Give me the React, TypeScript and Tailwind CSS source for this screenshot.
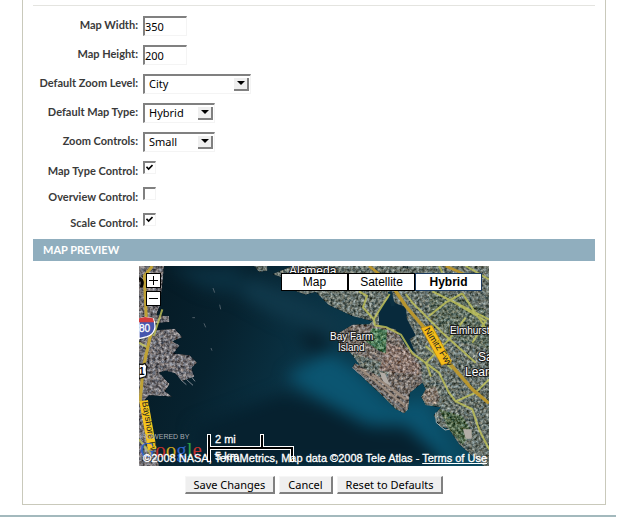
import { useState } from "react";
import type { ReactNode } from "react";

const labelClass =
  "w-[105px] shrink-0 whitespace-nowrap text-right font-['Lato','Noto_Sans',sans-serif] text-[11px] font-bold text-[#3a3a3a]";
const sunken = "border-t-2 border-l-2 border-r border-b border-t-[#808080] border-l-[#808080] border-r-[#f4f4f4] border-b-[#f4f4f4]";

function Row({ id, label, children }: { id: string; label: string; children: ReactNode }) {
  return (
    <div className="flex h-[29px] items-center gap-[5px]">
      <label htmlFor={id} className={labelClass}>
        {label}
      </label>
      {children}
    </div>
  );
}

function TextRow({ id, label, value }: { id: string; label: string; value: string }) {
  return (
    <Row id={id} label={label}>
      <input
        id={id}
        type="text"
        defaultValue={value}
        className={`h-5 w-11 rounded-none bg-white text-[11px] text-black outline-none ${sunken}`}
      />
    </Row>
  );
}

function SelectRow({ id, label, options, wide }: { id: string; label: string; options: string[]; wide?: boolean }) {
  return (
    <Row id={id} label={label}>
      <div className={`relative h-5 ${wide ? "w-[108px]" : "w-[72px]"}`}>
        <select
          id={id}
          className={`block h-full w-full appearance-none rounded-none bg-white pl-1 text-[11px] text-black outline-none ${sunken}`}
        >
          {options.map((o) => (
            <option key={o}>{o}</option>
          ))}
        </select>
        <span className="pointer-events-none absolute top-1 right-0.5 flex h-[13px] w-[15px] items-center justify-center border-r-2 border-b-2 border-[#808080] bg-[#efefef]">
          <svg viewBox="0 0 8 4" className="h-1 w-2" aria-hidden="true">
            <path d="M0 0h8L4 4z" fill="#000" />
          </svg>
        </span>
      </div>
    </Row>
  );
}

function CheckRow({ id, label, checked }: { id: string; label: string; checked?: boolean }) {
  const [on, setOn] = useState(!!checked);
  return (
    <div className="flex h-[26px] items-start gap-[5px] pt-[3px]">
      <label htmlFor={id} className={`${labelClass} leading-5`}>
        {label}
      </label>
      <span className="relative size-[13px]">
        <input
          id={id}
          type="checkbox"
          checked={on}
          onChange={(e) => setOn(e.target.checked)}
          className={`block size-[13px] appearance-none bg-white ${sunken}`}
        />
        {on && (
          <svg viewBox="0 0 7 7" className="pointer-events-none absolute top-[3px] left-[3px] size-[7px]" aria-hidden="true">
            <path d="M.5 2.8 2.6 5 6.5 1" fill="none" stroke="#000" strokeWidth="1.6" />
          </svg>
        )}
      </span>
    </div>
  );
}

function Satellite() {
  return (
    <svg viewBox="0 0 350 200" className="block h-full w-full font-['Liberation_Sans',Arial,sans-serif]" aria-label="Satellite map of San Francisco Bay" role="img">
      <svg viewBox="0 0 1050 600" width="350" height="200">
        <defs>
          <linearGradient id="bay" x1="0" y1="0" x2="1" y2="0.25">
            <stop offset="0" stopColor="#051822" />
            <stop offset="0.3" stopColor="#07222f" />
            <stop offset="0.55" stopColor="#0a3345" />
            <stop offset="1" stopColor="#0a465c" />
          </linearGradient>
          <filter id="soft" x="-30%" y="-30%" width="160%" height="160%" colorInterpolationFilters="sRGB">
            <feGaussianBlur stdDeviation="24" />
          </filter>
          <filter id="city" x="0" y="0" width="1050" height="600" filterUnits="userSpaceOnUse" colorInterpolationFilters="sRGB">
            <feTurbulence type="fractalNoise" baseFrequency="0.12" numOctaves="3" seed="8" result="n" />
            <feColorMatrix in="n" type="matrix" values="1 .3 0 0 -.15  1 .2 .1 0 -.15  1 .1 .2 0 -.15  0 0 0 0 1" result="g" />
            <feComposite in="SourceGraphic" in2="g" operator="arithmetic" k1="0" k2="1" k3="0.85" k4="-0.42" result="m" />
            <feComposite in="m" in2="SourceGraphic" operator="in" />
          </filter>
        </defs>
        <rect width="1050" height="600" fill="url(#bay)" />
        <g filter="url(#soft)">
          <path d="M330 30 480 90 620 180 600 210 430 160 300 90Z" fill="#10384a" />
          <path d="M440 330 570 260 650 310 760 420 860 400 960 600 700 480 560 410Z" fill="#0b5571" />
          <path d="M470 200 540 200 580 250 520 260Z" fill="#071d29" />
          <path d="M430 380 560 415 680 480 800 480 900 570 900 600 180 600 160 480Z" fill="#06212f" />
          <path d="M80 0 300 0 330 90 200 70Z" fill="#0b3041" />
        </g>
        <g filter="url(#city)">
          <path d="M0 0H75L70 60 62 120 52 148 90 150 92 168 48 172 50 192 108 188 130 214 100 226 122 238 104 262 152 268 174 290 158 306 166 332 128 346 108 322 80 314 60 320 92 354 78 376 100 392 30 388 18 402 30 480 50 540 60 600H0Z" fill="#706e72" />
          <path d="M345 0H385V14L360 18ZM400 24 460 0H1050V600H1035L960 535 930 490 900 480 884 448 905 424 860 418 846 392 860 370 850 350 812 380 808 430 796 442 770 430 720 380 640 305 648 292 662 298 635 262 600 230 596 206 640 176 690 174 700 166 640 150 570 118 530 78 500 86 470 76 440 40Z" fill="#66706a" />
          <path d="M640 176H742L790 206 822 262 846 300 850 350 812 380 806 430 790 440 640 305 648 292 700 320 740 340 760 300 700 280 640 262 600 230 600 200Z" fill="#746d68" />
          <path d="M745 230 800 250 840 300 838 326 720 314Z" fill="#85736b" />
          <path d="M700 186 744 192 740 262 716 252 680 226Z" fill="#4c7856" />
          <path d="M870 60 1040 130 1050 250 940 220 870 150Z" fill="#5f6d60" />
          <path d="M900 430 970 450 1000 500 970 536 930 490Z" fill="#50664b" />
          <path d="M860 370 890 362 902 392 894 414 866 416 850 396Z" fill="#857a70" />
        </g>
        <path d="M720 130 752 92 770 112 800 124 804 160 830 208 812 220 830 262 800 240 770 190 720 180Z" fill="#082a3c" />
        <path d="M752 76 762 120" stroke="#0c3041" strokeWidth="12" />
        <g stroke="#7d868e" strokeWidth="3" fill="none">
          <path d="M640 305 790 430M142 340 162 358M154 328 168 346M126 342 142 356" />
          <path d="m195 172 5 12M222 66l5 14M242 116l3 14M216 246l3 8M160 155h8" opacity=".6" />
        </g>
        <path d="M665 308 796 418M700 326 800 400" stroke="#9c8c7e" strokeWidth="6" />
        <path d="M722 318 738 322 754 360 732 346ZM972 490H998V518H980Z" fill="#b3ada6" />
        <path d="M890 440 892 470 918 492 930 490" fill="none" stroke="#a8b0ae" strokeWidth="3" />
        <g fill="none" stroke="#c3c559" strokeWidth="6" opacity=".8">
          <path d="M660 76 684 90 672 124 704 160 708 178 742 184 786 206 820 262 862 292 900 320 930 380 950 406 1010 380 1050 340" />
          <path d="M704 160 752 84M800 84 820 110 910 200 1010 290M870 150 920 110 970 82M970 82 1050 200M930 100 1040 165 1000 230M862 290 930 220 980 155M950 406 1000 430 1020 490 1050 550M880 76 1050 160" />
          <path d="M862 292 876 332M860 240 940 310M900 0 910 20M980 0 1050 40" />
          <path d="M40 196 18 270M0 230 24 244M44 210 70 130M0 520 40 570" />
        </g>
        <path d="M760 60 800 120 860 190 930 290 1000 370 1050 412" fill="none" stroke="#b8962f" strokeWidth="10" />
        <path d="M690 0 740 40M920 0 1010 40" stroke="#b8942f" strokeWidth="8" />
        <path d="M40 0 16 30 22 160M36 200 12 310 4 400 30 470 36 560" fill="none" stroke="#bfa236" strokeWidth="9" />
        <path d="M14 404 40 550" stroke="#f4c51c" strokeWidth="26" />
        <path d="M846 186 878 178 938 286 908 298Z" fill="#f5bd18" stroke="#b8860b" strokeWidth="2" />
        <path d="M0 158 18 154 42 158C54 180 48 204 24 212L0 218Z" fill="#4656ad" stroke="#fff" strokeWidth="4" />
        <path d="M0 157 18 153 42 157 45 169H0Z" fill="#d33c3c" />
        <path d="M0 294 10 296 18 292 24 302C18 312 28 322 20 332L0 338Z" fill="#fff" stroke="#111" strokeWidth="4" />
        <path d="M0 36Q16 44 6 64" fill="none" stroke="#050505" strokeWidth="9" />
      </svg>

      <g fill="#fff" stroke="#1c1c1c" strokeWidth="2" paintOrder="stroke" strokeLinejoin="round">
        <text x="150" y="9" fontSize="12">Alameda</text>
        <text x="191" y="74" fontSize="10">Bay Farm</text>
        <text x="199" y="85" fontSize="10">Island</text>
        <text x="311" y="68" fontSize="10">Elmhurst</text>
        <text x="339" y="95" fontSize="12">Sa</text>
        <text x="326" y="110" fontSize="12">Lean</text>
      </g>
      <text x="0" y="66" fontSize="10" fill="#fff" stroke="#fff" strokeWidth=".3">80</text>
      <text x="0" y="109" fontSize="10" fontWeight="bold" fill="#000">1</text>
      <text transform="translate(285 64) rotate(57)" fontSize="9" fill="#222">Nimitz Fwy</text>
      <text transform="translate(3 136) rotate(80)" fontSize="9" fill="#222">Bayshore Fwy</text>
      <text x="3" y="173" fontSize="7" fill="#a5abb0">POWERED BY</text>
      <g fontSize="21" className="font-['Liberation_Serif',serif]">
        <text x="1" y="191">
          <tspan fill="#2f62c4">G</tspan>
          <tspan fill="#c2302b">o</tspan>
          <tspan fill="#c9a51d">o</tspan>
          <tspan fill="#2f62c4">g</tspan>
          <tspan fill="#2e9a45">l</tspan>
          <tspan fill="#c2302b">e</tspan>
        </text>
      </g>
      <g fill="none" strokeLinecap="square">
        <path d="M70 170V194M70 182H153M123 170V182M153 184V194" stroke="#fff" strokeWidth="4" />
        <path d="M70 170V194M70 182H153M123 170V182M153 184V194" stroke="#000" strokeWidth="2" />
      </g>
      <g fill="#fff" fontSize="11" stroke="#fff" strokeWidth=".3">
        <text x="76" y="177">2 mi</text>
        <text x="76" y="194">5 km</text>
      </g>
    </svg>
  );
}

const mapButton = "h-[18px] w-[67px] border bg-white text-center text-[12px] leading-4 text-black";
const zoomButton = "flex size-[15px] items-center justify-center border border-black bg-white";

function MapPreview() {
  return (
    <div className="relative mx-auto mt-[5px] h-[200px] w-[350px] overflow-hidden bg-[#06202c] font-['Liberation_Sans',Arial,sans-serif]">
      <Satellite />
      <div className="absolute top-[7px] left-[7px] flex flex-col gap-[3px]">
        <button type="button" aria-label="Zoom in" className={zoomButton}>
          <svg viewBox="0 0 9 9" className="size-[9px]">
            <path d="M0 4.5h9M4.5 0v9" stroke="#000" />
          </svg>
        </button>
        <button type="button" aria-label="Zoom out" className={zoomButton}>
          <svg viewBox="0 0 9 9" className="size-[9px]">
            <path d="M0 4.5h9" stroke="#000" />
          </svg>
        </button>
      </div>
      <div className="absolute top-[7px] right-[7px] flex">
        <button type="button" className={`${mapButton} border-black`}>Map</button>
        <button type="button" className={`${mapButton} border-black`}>Satellite</button>
        <button type="button" className={`${mapButton} border-[#1c3a5e] font-bold`}>Hybrid</button>
      </div>
      <p className="absolute right-[2px] bottom-0 whitespace-nowrap text-[11px] leading-4 text-white [-webkit-text-stroke:0.3px_white]">
        ©2008 NASA, TerraMetrics, Map data ©2008 Tele Atlas - <a href="#terms" className="underline">Terms of Use</a>
      </p>
    </div>
  );
}

const formButton =
  "h-[18px] border-t border-l border-r-2 border-b-2 border-t-[#f6f6f6] border-l-[#f6f6f6] border-r-[#808080] border-b-[#808080] bg-[#efefef] px-2 text-[11px] leading-[15px] text-black";

export default function App() {
  return (
    <main className="bg-white font-['Noto_Sans',sans-serif]">
      <form className="mr-[29px] ml-[22px] border-x border-b border-[#c9c9bb] px-[10px] pb-[10px]" onSubmit={(e) => e.preventDefault()}>
        <hr className="mb-[5px] h-1.5 border-t-0 border-b border-[#e4e4e0]" />
        <TextRow id="width" label="Map Width:" value="350" />
        <TextRow id="height" label="Map Height:" value="200" />
        <SelectRow id="zoom" label="Default Zoom Level:" options={["City", "Street", "Country"]} wide />
        <SelectRow id="type" label="Default Map Type:" options={["Hybrid", "Map", "Satellite"]} />
        <SelectRow id="controls" label="Zoom Controls:" options={["Small", "Large", "None"]} />
        <div className="mt-0.5">
          <CheckRow id="map-type" label="Map Type Control:" checked />
          <CheckRow id="overview" label="Overview Control:" />
          <CheckRow id="scale" label="Scale Control:" checked />
        </div>
        <h2 className="mt-[3px] bg-[#90aebe] px-[10px] font-['Lato','Noto_Sans',sans-serif] text-[11px] leading-[22px] font-bold text-white">MAP PREVIEW</h2>
        <MapPreview />
        <div className="mt-[10px] flex justify-center gap-1">
          <button type="submit" className={formButton}>Save Changes</button>
          <button type="button" className={formButton}>Cancel</button>
          <button type="reset" className={formButton}>Reset to Defaults</button>
        </div>
      </form>
      <hr className="mt-[10px] mr-[19px] border-t-2 border-[#a3b9bd]" />
    </main>
  );
}
